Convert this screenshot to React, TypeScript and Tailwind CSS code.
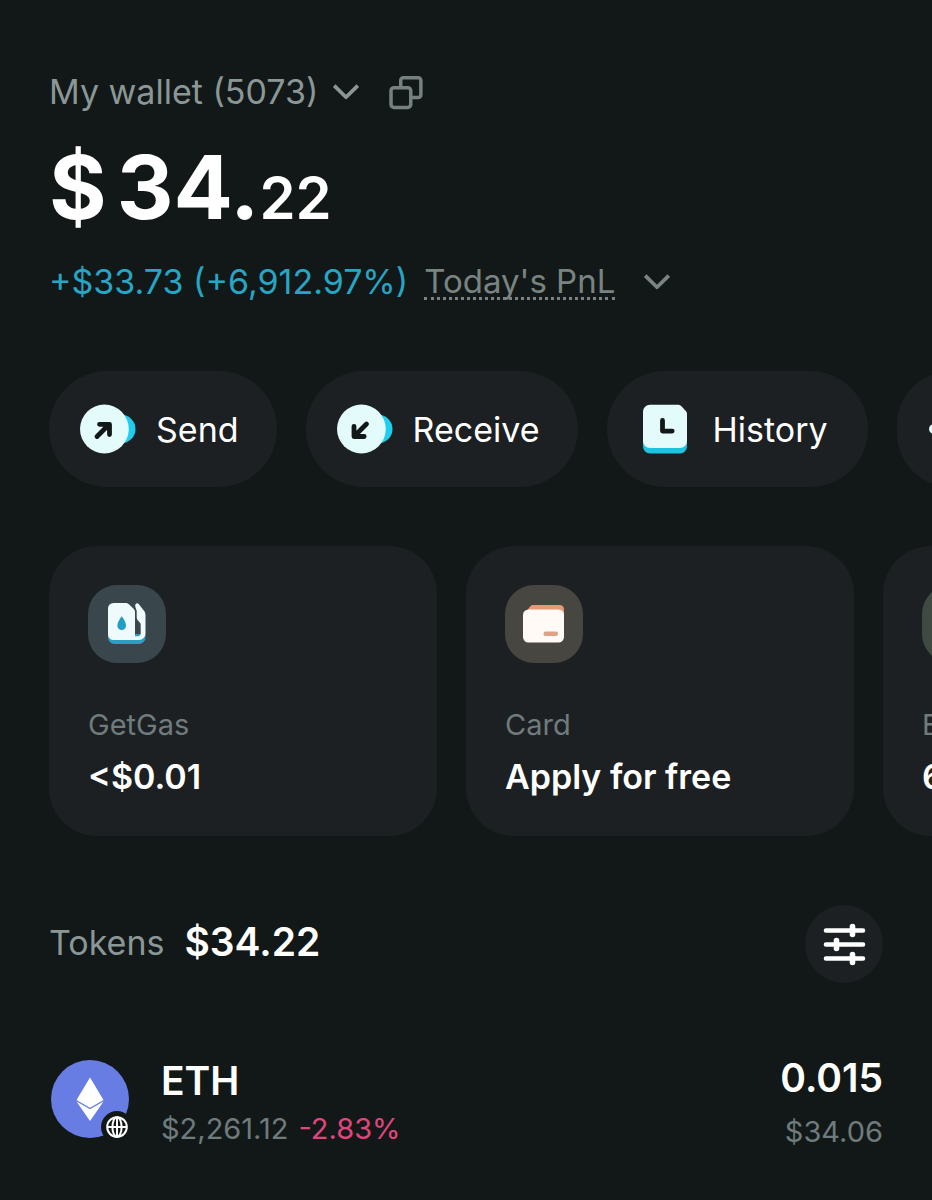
import type { ReactNode } from "react";

function Chevron() {
  return (
    <svg className="w-7 h-5" viewBox="0 0 28 20" fill="none" stroke="currentColor" strokeWidth="3.7">
      <path d="M2.2 3.6 14 15.2 25.8 3.6" strokeLinejoin="round" />
    </svg>
  );
}

function CopyIcon() {
  return (
    <svg className="w-[35px] h-[35px]" viewBox="0 0 36 36" fill="none" stroke="currentColor" strokeWidth="3.6">
      <rect x="3.1" y="13.1" width="20.3" height="20.3" rx="3" />
      <path d="M13.1 13.1V5.4a2.6 2.6 0 0 1 2.6-2.6h15.5a2.6 2.6 0 0 1 2.6 2.6v15.2a2.6 2.6 0 0 1-2.6 2.6h-7.8" />
    </svg>
  );
}

function TransferIcon({ incoming = false }: { incoming?: boolean }) {
  return (
    <svg className="w-14 h-[50px]" viewBox="0 -1 56 50">
      <circle cx="41.2" cy="24" r="14.3" fill="#1fcdec" />
      <circle cx="24.4" cy="24" r="24.4" fill="#e4fbfc" />
      <g fill="none" stroke="#121817" strokeWidth="4.8" strokeLinecap="round" strokeLinejoin="round">
        {incoming ? (
          <path d="M29.5 19 18 30.5M17 21.3v10.200h10.200" />
        ) : (
          <path d="M17 31.500 28.500 20M19.500 19.300h10v10.200" />
        )}
      </g>
    </svg>
  );
}

function HistoryIcon() {
  return (
    <svg className="w-11 h-[50px]" viewBox="0 -1 44 50">
      <path d="M0 32h44v9.500a7 7 0 0 1-7 7H7a7 7 0 0 1-7-7Z" fill="#1fc3e0" />
      <path d="M7-.3h27.500c1.500 0 2.700.4 3.700 1.400l4.400 4.600c1 1 1.400 2 1.400 3.300v27a7 7 0 0 1-7 7H7a7 7 0 0 1-7-7V6.700a7 7 0 0 1 7-7Z" fill="#e4fbfc" />
      <path d="M19.500 15.500v10.600h9.700" fill="none" stroke="#121817" strokeWidth="4.800" strokeLinecap="round" strokeLinejoin="round" />
    </svg>
  );
}

function MoreIcon() {
  return (
    <svg className="w-11 h-12" viewBox="0 0 44 48" fill="#e4fbfc">
      <circle cx="5" cy="24" r="5" />
      <circle cx="22" cy="24" r="5" />
      <circle cx="39" cy="24" r="5" />
    </svg>
  );
}

function GasIcon() {
  return (
    <svg className="w-[78px] h-[78px]" viewBox="0 0 78 78">
      <path d="M20 49h37.500v3.500a6.500 6.500 0 0 1-6.500 6.500H26.500a6.500 6.500 0 0 1-6.500-6.500Z" fill="#2b9fc0" />
      <path d="M25.500 18h12c1.400 0 2.400.4 3.400 1.300l4.400 4.100c1 1 1.700 2 1.700 3.600v24.200h3.300a2.400 2.400 0 0 0 2.400-2.400v-8.300c0-1.700-.5-2.700-1.800-3.900-1.500-1.400-2.200-2.500-2.200-4.500v-6l-1.300-4.200c-1-2.900 1.700-4.900 3.700-2.500l4.700 6c1.200 1.500 1.700 2.800 1.700 4.700v18.400a6.500 6.500 0 0 1-6.500 6.500h-25.500a5.500 5.500 0 0 1-5.500-5.500V23.500a5.500 5.500 0 0 1 5.500-5.500Z" fill="#effafd" />
      <path d="M33.700 31.300c2.300 3.200 4.300 6.200 4.300 9.500a4.300 4.300 0 0 1-8.600 0c0-3.300 2-6.300 4.300-9.500Z" fill="#209dc5" />
    </svg>
  );
}

function CardIcon() {
  return (
    <svg className="w-[78px] h-[78px]" viewBox="0 0 78 78">
      <path d="m22.500 25 2-2.800c1.200-1.600 2-2.200 4-2.200h26c3 0 4.500 1.500 4.500 4.500V35H22.500Z" fill="#e39b76" />
      <rect x="18" y="24.500" width="41" height="33" rx="5.500" fill="#fffaf6" />
      <rect x="38.500" y="46.500" width="14.500" height="4.500" rx="2" fill="#e0a184" />
    </svg>
  );
}

function FilterIcon() {
  return (
    <svg className="w-11 h-11" viewBox="0 0 44 44" fill="none" stroke="#fff" strokeLinecap="round">
      <path d="M4 8.500h37M4 22.500h37M4 36.500h37" strokeWidth="4.600" />
      <path d="M30.500 4.500v8M14.500 18.500v8M30.500 32.500v8" strokeWidth="5.600" />
    </svg>
  );
}

function EthIcon() {
  return (
    <svg className="w-20 h-20" viewBox="-1 0 80 80">
      <circle cx="40" cy="40" r="39" fill="#687de3" />
      <path d="M40 18.500 53.500 41 40 48.700 26.500 41Z" fill="#fff" />
      <path d="M26.500 42.600 40 50.300l13.500-7.700L40 62Z" fill="#fff" />
    </svg>
  );
}

function GlobeIcon() {
  return (
    <svg className="w-6 h-6" viewBox="0 0 24 24" fill="none" stroke="#fff" strokeWidth="2">
      <circle cx="12" cy="12" r="9.800" />
      <ellipse cx="12" cy="12" rx="4.600" ry="9.800" />
      <path d="M2.200 12h19.600M12 2.200v19.600" />
    </svg>
  );
}

const actions = [
  { label: "Send", icon: <TransferIcon />, style: "pl-[31px] pr-[38px] gap-5" },
  { label: "Receive", icon: <TransferIcon incoming />, style: "pl-[31px] pr-[38px] gap-5" },
  { label: "History", icon: <HistoryIcon />, style: "pl-9 pr-10 gap-[26px]" },
  { label: "", icon: <MoreIcon />, style: "px-8" },
];

type InfoCardProps = { label: string; value: string; tint: string; icon?: ReactNode };

const cards: InfoCardProps[] = [
  { label: "GetGas", value: "<$0.01", tint: "bg-[#39474c]", icon: <GasIcon /> },
  { label: "Card", value: "Apply for free", tint: "bg-[#484640]", icon: <CardIcon /> },
  { label: "E", value: "6", tint: "bg-[#414a42]" },
];

function InfoCard({ label, value, tint, icon }: InfoCardProps) {
  return (
    <button className="w-[388px] shrink-0 rounded-[48px] bg-[#1c2022] p-[39px] text-left">
      <div className={`w-[78px] h-[78px] rounded-[29px] ${tint}`}>{icon}</div>
      <div className="mt-10 text-[29px] leading-[44px] text-[#6f7b7c]">{label}</div>
      <div className="mt-2.5 text-[34px] leading-[40px] font-semibold text-white">{value}</div>
    </button>
  );
}

export default function App() {
  return (
    <main className="min-h-screen overflow-hidden bg-[#121817] pt-[66px] pb-10 font-['Inter',sans-serif] text-white">
      <header className="px-[49px]">
        <div className="flex items-center text-[34px] leading-[52px] text-[#8b9796]">
          <button className="flex items-center gap-[14px]">
            My wallet (5073)
            <Chevron />
          </button>
          <button aria-label="Copy address" className="ml-7 text-[#75817f]">
            <CopyIcon />
          </button>
        </div>
        <h1 className="mt-[25px] flex items-baseline text-[88px] leading-[88px] font-bold">
          <span className="mr-2.5">$</span>
          <span>34.</span>
          <span className="text-[58px] font-semibold">22</span>
        </h1>
        <div className="mt-[18px] flex items-center text-[34px] leading-[44px]">
          <span className="text-[#27a5c5]">+$33.73 (+6,912.97%)</span>
          <button className="ml-4 flex items-center gap-7 text-[#798482]">
            <span className="border-b-3 border-dotted border-[#798482] text-[33px] leading-[32px]">Today's PnL</span>
            <Chevron />
          </button>
        </div>
      </header>

      <nav className="mt-[67px] flex gap-[29px] overflow-hidden pl-[49px]">
        {actions.map((action) => (
          <button
            key={action.label}
            aria-label={action.label || "More"}
            className={`flex h-[116px] shrink-0 items-center rounded-full bg-[#1c2022] text-[34px] ${action.style}`}
          >
            {action.icon}
            {action.label}
          </button>
        ))}
      </nav>

      <section className="mt-[59px] flex gap-[29px] overflow-hidden pl-[49px]">
        {cards.map((card) => (
          <InfoCard key={card.label} {...card} />
        ))}
      </section>

      <section className="px-[49px]">
        <div className="mt-[69px] flex items-center justify-between">
          <h2 className="mb-1 flex items-center gap-5 text-[34px] text-[#8b9796]">
            Tokens
            <span className="text-[39px] font-semibold text-white">$34.22</span>
          </h2>
          <button
            aria-label="Filter tokens"
            className="flex w-[78px] h-[78px] items-center justify-center rounded-full bg-[#1c2022]"
          >
            <FilterIcon />
          </button>
        </div>

        <a href="#eth" className="mt-[68px] flex items-start justify-between">
          <div className="flex items-start">
            <div className="relative mt-2">
              <EthIcon />
              <span className="absolute -right-1 -bottom-1 flex w-8 h-8 items-center justify-center rounded-full bg-[#121817]">
                <GlobeIcon />
              </span>
            </div>
            <div className="ml-8 pt-1.5">
              <div className="text-[39px] leading-[48px] font-semibold">ETH</div>
              <div className="flex gap-2.5 text-[29px] leading-[48px]">
                <span className="text-[#6f7b7c]">$2,261.12</span>
                <span className="text-[#e2457e]">-2.83%</span>
              </div>
            </div>
          </div>
          <div className="text-right">
            <div className="text-[39px] leading-[54px] font-semibold">0.015</div>
            <div className="text-[29px] leading-[54px] text-[#6f7b7c]">$34.06</div>
          </div>
        </a>
      </section>
    </main>
  );
}
